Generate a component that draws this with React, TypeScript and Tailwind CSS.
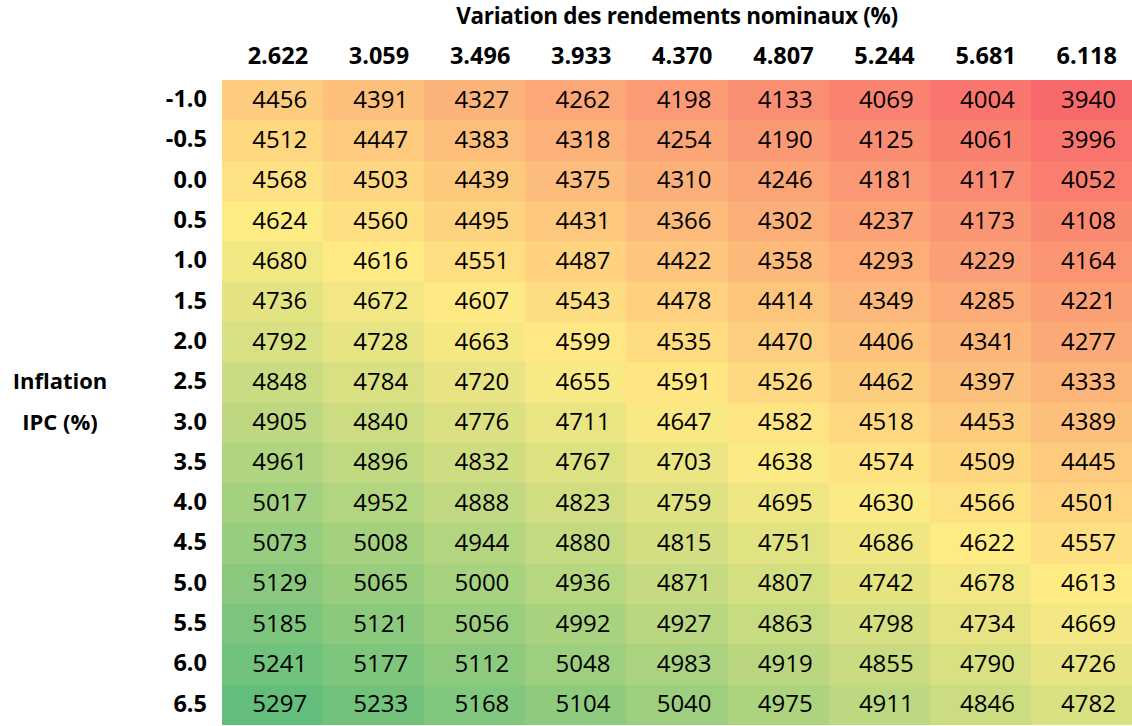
const cols = ["2.622", "3.059", "3.496", "3.933", "4.370", "4.807", "5.244", "5.681", "6.118"];

const rows: [string, number[]][] = [
  ["-1.0", [4456, 4391, 4327, 4262, 4198, 4133, 4069, 4004, 3940]],
  ["-0.5", [4512, 4447, 4383, 4318, 4254, 4190, 4125, 4061, 3996]],
  ["0.0", [4568, 4503, 4439, 4375, 4310, 4246, 4181, 4117, 4052]],
  ["0.5", [4624, 4560, 4495, 4431, 4366, 4302, 4237, 4173, 4108]],
  ["1.0", [4680, 4616, 4551, 4487, 4422, 4358, 4293, 4229, 4164]],
  ["1.5", [4736, 4672, 4607, 4543, 4478, 4414, 4349, 4285, 4221]],
  ["2.0", [4792, 4728, 4663, 4599, 4535, 4470, 4406, 4341, 4277]],
  ["2.5", [4848, 4784, 4720, 4655, 4591, 4526, 4462, 4397, 4333]],
  ["3.0", [4905, 4840, 4776, 4711, 4647, 4582, 4518, 4453, 4389]],
  ["3.5", [4961, 4896, 4832, 4767, 4703, 4638, 4574, 4509, 4445]],
  ["4.0", [5017, 4952, 4888, 4823, 4759, 4695, 4630, 4566, 4501]],
  ["4.5", [5073, 5008, 4944, 4880, 4815, 4751, 4686, 4622, 4557]],
  ["5.0", [5129, 5065, 5000, 4936, 4871, 4807, 4742, 4678, 4613]],
  ["5.5", [5185, 5121, 5056, 4992, 4927, 4863, 4798, 4734, 4669]],
  ["6.0", [5241, 5177, 5112, 5048, 4983, 4919, 4855, 4790, 4726]],
  ["6.5", [5297, 5233, 5168, 5104, 5040, 4975, 4911, 4846, 4782]],
];

// Excel-style 3 colour scale: red (min) -> yellow (median) -> green (max)
const all = rows.flatMap(([, v]) => v).sort((a, b) => a - b);
const min = all[0];
const max = all[all.length - 1];
const mid = (all[all.length / 2 - 1] + all[all.length / 2]) / 2;

const red = [248, 105, 107];
const yellow = [255, 235, 132];
const green = [99, 190, 123];

function mix(a: number[], b: number[], t: number) {
  const c = a.map((x, i) => Math.round(x + (b[i] - x) * t));
  return `rgb(${c[0]}, ${c[1]}, ${c[2]})`;
}

function scale(v: number) {
  if (v <= mid) return mix(red, yellow, (v - min) / (mid - min));
  return mix(yellow, green, (v - mid) / (max - mid));
}

export default function App() {
  return (
    <div className="h-[726px] w-[1132px] overflow-hidden bg-white font-['Open_Sans',sans-serif] text-black">
      <div className="grid grid-cols-[120px_102px_repeat(9,1fr)] grid-rows-[32px_48px_repeat(16,40.3125px)]">
        {/* Title */}
        <div className="col-span-2" />
        <div className="col-span-9 flex items-center justify-center text-[22.5px] font-bold tracking-[-0.3px]">
          Variation des rendements nominaux (%)
        </div>

        {/* Column headers */}
        <div className="col-span-2" />
        {cols.map((c) => (
          <div key={c} className="flex items-center justify-end pr-[15px] text-[23.5px] font-bold">
            {c}
          </div>
        ))}

        {rows.map(([label, values], i) => (
          <Row key={label} label={label} values={values} side={i === 7 ? "Inflation" : i === 8 ? "IPC (%)" : ""} />
        ))}
      </div>
    </div>
  );
}

function Row({ label, values, side }: { label: string; values: number[]; side: string }) {
  return (
    <>
      <div className="flex items-center justify-center pb-[3px] text-[22px] font-bold">{side}</div>
      <div className="flex items-center justify-end pb-[3px] pr-[15px] text-[23.5px] font-bold">{label}</div>
      {values.map((v, j) => (
        <div
          key={j}
          className="flex items-center justify-end pb-[3px] pr-[16px] text-[24px]"
          style={{ backgroundColor: scale(v) }}
        >
          {v}
        </div>
      ))}
    </>
  );
}
